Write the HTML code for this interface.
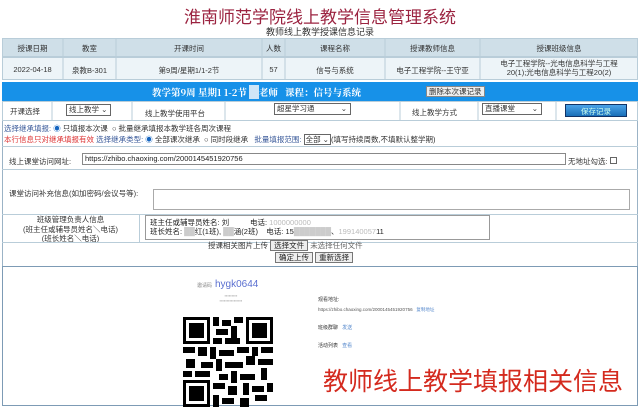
<!DOCTYPE html><html><head><meta charset="utf-8"><style>
*{margin:0;padding:0;box-sizing:border-box}
body{width:640px;height:400px;overflow:hidden;background:#fff;font-family:"Liberation Sans","Noto Sans CJK SC",sans-serif;position:relative;color:#333}
.a{position:absolute;white-space:nowrap}
.c{text-align:center}
.f7{font-size:7.5px}
.box{position:absolute;border:1px solid #bbb;background:#fff}
</style></head><body>
<div class="a c" style="left:0;width:640px;top:3px;font-size:17px;color:#9b2340">淮南师范学院线上教学信息管理系统</div>
<div class="a c f7" style="left:0;width:640px;top:25px;font-size:9px;color:#333">教师线上教学授课信息记录</div>
<!-- table -->
<div class="a" style="left:2px;top:38px;width:636px;height:19px;background:#cfdfe8;border:1px solid #b9cdd9"></div>
<div class="a" style="left:2px;top:57px;width:636px;height:23px;background:#edf4f8;border:1px solid #b9cdd9"></div>
<svg class="a" style="left:0;top:38px" width="640" height="42"><g stroke="#b9cdd9"><line x1="63" y1="0" x2="63" y2="42"/><line x1="116" y1="0" x2="116" y2="42"/><line x1="262" y1="0" x2="262" y2="42"/><line x1="285" y1="0" x2="285" y2="42"/><line x1="385" y1="0" x2="385" y2="42"/><line x1="480" y1="0" x2="480" y2="42"/></g></svg>
<div class="a c f7" style="left:2px;width:61px;top:43px">授课日期</div>
<div class="a c f7" style="left:63px;width:53px;top:43px">教室</div>
<div class="a c f7" style="left:116px;width:146px;top:43px">开课时间</div>
<div class="a c f7" style="left:262px;width:23px;top:43px">人数</div>
<div class="a c f7" style="left:285px;width:100px;top:43px">课程名称</div>
<div class="a c f7" style="left:385px;width:95px;top:43px">授课教师信息</div>
<div class="a c f7" style="left:480px;width:158px;top:43px">授课班级信息</div>
<div class="a c f7" style="left:2px;width:61px;top:65px">2022-04-18</div>
<div class="a c f7" style="left:63px;width:53px;top:65px">泉教B-301</div>
<div class="a c f7" style="left:116px;width:146px;top:65px">第9周/星期1/1-2节</div>
<div class="a c f7" style="left:262px;width:23px;top:65px">57</div>
<div class="a c f7" style="left:285px;width:100px;top:65px">信号与系统</div>
<div class="a c f7" style="left:385px;width:95px;top:65px">电子工程学院--王守亚</div>
<div class="a c f7" style="left:480px;width:158px;top:59px;line-height:9px">电子工程学院--光电信息科学与工程<br>20(1);光电信息科学与工程20(2)</div>
<!-- blue bar -->
<div class="a" style="left:2px;top:82px;width:636px;height:19px;background:#1791e8"></div>
<div class="a" style="left:152px;top:85px;font-size:9.5px;font-weight:bold;color:#fff;font-family:'Noto Serif CJK SC',serif">教学第9周 星期1 1-2节 <span style="background:#cfe6f7;color:#cfe6f7">&nbsp;&nbsp;&nbsp;&nbsp;</span>老师&nbsp;&nbsp;&nbsp;课程：信号与系统</div>
<div class="a f7" style="left:426px;top:86px;background:#eee;border:1px solid #888;padding:0 2px;line-height:9px">删除本次课记录</div>
<!-- row -->
<div class="a" style="left:2px;top:101px;width:636px;height:20px;border:1px solid #b9cdd9;background:#fff"></div>
<svg class="a" style="left:0;top:101px" width="640" height="20"><g stroke="#b9cdd9"><line x1="52" y1="0" x2="52" y2="20"/><line x1="132" y1="0" x2="132" y2="20"/><line x1="225" y1="0" x2="225" y2="20"/><line x1="400" y1="0" x2="400" y2="20"/><line x1="478" y1="0" x2="478" y2="20"/><line x1="556" y1="0" x2="556" y2="20"/></g></svg>
<div class="a f7" style="left:10px;top:106px">开课选择</div>
<div class="box f7" style="left:66px;top:104px;width:45px;height:12px;border-color:#666;line-height:10px;padding-left:2px">线上教学 ⌄</div>
<div class="a f7" style="left:145px;top:108px">线上教学使用平台</div>
<div class="box f7" style="left:274px;top:103px;width:77px;height:12px;border-color:#666;line-height:10px;padding-left:2px">超星学习通<span style="float:right;padding-right:3px">⌄</span></div>
<div class="a f7" style="left:412px;top:107px">线上教学方式</div>
<div class="box f7" style="left:482px;top:103px;width:60px;height:12px;border-color:#666;line-height:10px;padding-left:2px">直播课堂<span style="float:right;padding-right:3px">⌄</span></div>
<div class="a c f7" style="left:565px;top:104px;width:62px;height:13px;background:linear-gradient(#4aa3e8,#1a6fb8);color:#cfe;line-height:13px;border:1px solid #136">保存记录</div>
<!-- options block -->
<div class="a" style="left:2px;top:121px;width:636px;height:147px;border:1px solid #9bb3c6;border-top:none"></div>
<div class="a f7" style="left:4px;top:123px;color:#333"><span style="color:#3a5a9a">选择继承填报:</span> <span style="color:#1565c0">◉</span> 只填报本次课 &nbsp;○ 批量继承填报本教学班各周次课程</div>
<div class="a f7" style="left:4px;top:134px"><span style="color:#d33">本行信息只对继承填报有效</span> <span style="color:#3a5a9a">选择继承类型:</span> <span style="color:#1565c0">◉</span> 全部课次继承 &nbsp;○ 同时段继承 &nbsp;&nbsp;<span style="color:#3a5a9a">批量填报范围:</span> <span style="border:1px solid #666;padding:0 1px">全部 ⌄</span>(填写持续周数,不填默认整学期)</div>
<div class="a" style="left:2px;top:146px;width:636px;height:1px;background:#b9cdd9"></div>
<div class="a f7" style="left:9px;top:156px">线上课堂访问网址:</div>
<div class="box f7" style="left:82px;top:153px;width:484px;height:12px;border-color:#888;line-height:10px;padding-left:2px;color:#222">https://zhibo.chaoxing.com/2000145451920756</div>
<div class="a f7" style="left:568px;top:156px">无地址勾选: <span style="display:inline-block;width:7px;height:7px;border:1px solid #666"></span></div>
<div class="a" style="left:2px;top:169px;width:636px;height:1px;background:#b9cdd9"></div>
<div class="a f7" style="left:9px;top:188px">课堂访问补充信息(如加密码/会议号等):</div>
<div class="box" style="left:153px;top:189px;width:477px;height:21px;border-color:#aaa"></div>
<div class="a" style="left:2px;top:214px;width:636px;height:1px;background:#b9cdd9"></div>
<div class="a" style="left:139px;top:214px;width:1px;height:28px;background:#b9cdd9"></div>
<div class="a c f7" style="left:2px;width:137px;top:215px;line-height:9.5px">班级管理负责人信息<br>(班主任或辅导员姓名＼电话)<br>(班长姓名＼电话)</div>
<div class="box f7" style="left:145px;top:215px;width:345px;height:25px;border-color:#999;line-height:9px;padding:2px 4px;color:#222">班主任或辅导员姓名: 刘 &nbsp;&nbsp;&nbsp;&nbsp;&nbsp;&nbsp;&nbsp;&nbsp;&nbsp;电话: <span style="color:#bbb">1000000000</span><br>班长姓名: <span style="color:#ccc">██</span>红(1班), <span style="color:#ccc">██</span>涵(2班) &nbsp;&nbsp;&nbsp;电话: 15<span style="color:#ccc">███████</span>、<span style="color:#bbb">199140057</span>11</div>
<div class="a" style="left:2px;top:242px;width:636px;height:1px;background:#b9cdd9"></div>
<div class="a f7" style="left:208px;top:240px">授课相关图片上传 <span style="border:1px solid #777;background:#eee;padding:0 3px;color:#222">选择文件</span> <span style="color:#666">未选择任何文件</span></div>
<div class="a f7" style="left:275px;top:252px"><span style="border:1px solid #777;background:#eee;padding:0 3px;color:#222">确定上传</span> <span style="border:1px solid #777;background:#eee;padding:0 3px;color:#222">重新选择</span></div>
<!-- image section -->
<div class="a" style="left:2px;top:266px;width:636px;height:140px;border:1px solid #7d9bb5;background:#fff"></div>
<div class="a" style="left:197px;top:282px;font-size:5px;color:#888">邀请码</div>
<div class="a" style="left:215px;top:279px;font-size:10px;color:#5a6fd0">hygk0644</div>
<div class="a c" style="left:186px;width:90px;top:293px;font-size:4px;color:#aaa;line-height:5px">▪▪▪▪▪▪▪▪▪<br>▪▪▪▪▪▪▪▪▪▪▪▪▪▪▪▪</div>
<svg class="a" style="left:183px;top:317px" width="90" height="90" viewBox="0 0 30 30" shape-rendering="crispEdges">
<g fill="#000">
<rect x="0" y="0" width="9" height="9"/><rect x="21" y="0" width="9" height="9"/><rect x="0" y="21" width="9" height="9"/>
</g><g fill="#fff"><rect x="1" y="1" width="7" height="7"/><rect x="22" y="1" width="7" height="7"/><rect x="1" y="22" width="7" height="7"/></g>
<g fill="#000"><rect x="2" y="2" width="5" height="5"/><rect x="23" y="2" width="5" height="5"/><rect x="2" y="23" width="5" height="5"/>
<rect x="10" y="0" width="2" height="3"/><rect x="13" y="1" width="3" height="2"/><rect x="17" y="0" width="3" height="2"/><rect x="11" y="4" width="4" height="2"/><rect x="16" y="3" width="2" height="4"/><rect x="10" y="7" width="3" height="2"/><rect x="14" y="7" width="5" height="2"/>
<rect x="0" y="10" width="4" height="2"/><rect x="5" y="10" width="3" height="3"/><rect x="9" y="10" width="2" height="4"/><rect x="12" y="11" width="5" height="2"/><rect x="18" y="10" width="4" height="2"/><rect x="23" y="10" width="2" height="3"/><rect x="26" y="10" width="4" height="2"/>
<rect x="1" y="14" width="3" height="3"/><rect x="6" y="15" width="4" height="2"/><rect x="11" y="14" width="2" height="4"/><rect x="14" y="15" width="6" height="2"/><rect x="21" y="13" width="3" height="3"/><rect x="25" y="14" width="5" height="2"/>
<rect x="0" y="18" width="3" height="2"/><rect x="4" y="18" width="5" height="2"/><rect x="12" y="19" width="3" height="2"/><rect x="16" y="18" width="2" height="4"/><rect x="19" y="19" width="5" height="2"/><rect x="26" y="17" width="2" height="4"/>
<rect x="10" y="22" width="4" height="2"/><rect x="15" y="23" width="3" height="3"/><rect x="20" y="22" width="2" height="4"/><rect x="23" y="23" width="4" height="2"/><rect x="28" y="22" width="2" height="3"/>
<rect x="10" y="26" width="2" height="4"/><rect x="13" y="27" width="4" height="2"/><rect x="19" y="27" width="3" height="3"/><rect x="24" y="26" width="4" height="2"/></g></svg>
<div class="a" style="left:318px;top:296px;font-size:5px;color:#333">观看地址:</div>
<div class="a" style="left:318px;top:307px;font-size:4.5px;color:#555">https://zhibo.chaoxing.com/2000145451920756 &nbsp;&nbsp;<span style="color:#58c">复制地址</span></div>
<div class="a" style="left:318px;top:324px;font-size:5px;color:#333">班级群聊 &nbsp;&nbsp;<span style="color:#58c">发送</span></div>
<div class="a" style="left:318px;top:342px;font-size:5px;color:#333">活动列表 &nbsp;&nbsp;<span style="color:#58c">查看</span></div>
<div class="a" style="left:323px;top:362px;font-size:25px;color:#d42a1e;letter-spacing:0">教师线上教学填报相关信息</div>
</body></html>
